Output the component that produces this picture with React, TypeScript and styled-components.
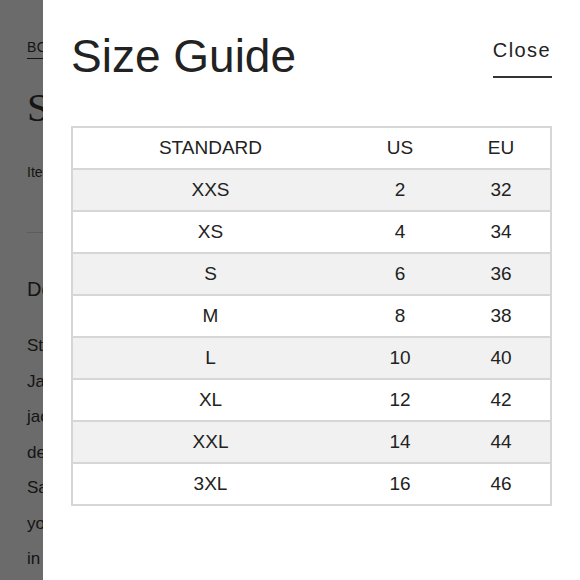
import React from "react";
import styled, { createGlobalStyle } from "styled-components";

const GlobalStyle = createGlobalStyle`
  html, body {
    margin: 0;
    padding: 0;
    background: #ffffff;
  }
  body {
    font-family: "Liberation Sans", Arial, sans-serif;
    color: #333333;
  }
`;

const Viewport = styled.div`
  position: relative;
  width: 580px;
  height: 580px;
  overflow: hidden;
  background: #ffffff;
`;

const Page = styled.div`
  display: flex;
  flex-direction: column;
  padding: 40px 0 0 27px;
  color: #333333;
  font-family: "Liberation Sans", Arial, sans-serif;
`;

const Breadcrumb = styled.a`
  align-self: flex-start;
  font-size: 14px;
  line-height: 14px;
  letter-spacing: 0.5px;
  color: #333333;
  text-decoration: none;
  padding-bottom: 4px;
  border-bottom: 1px solid #333333;
`;

const ProductTitle = styled.h1`
  margin: 29px 0 0;
  font-family: "Liberation Serif", "Times New Roman", serif;
  font-weight: 400;
  font-size: 40px;
  line-height: 40px;
`;

const ItemCode = styled.div`
  margin-top: 37px;
  font-size: 14px;
  line-height: 14px;
`;

const Divider = styled.hr`
  margin: 53px 0 0;
  border: none;
  border-top: 1px solid #dddddd;
  width: 500px;
`;

const SectionHeading = styled.h2`
  margin: 46px 0 0;
  font-size: 20px;
  line-height: 20px;
  font-weight: 400;
`;

const Paragraph = styled.div`
  margin-top: 29px;
  display: flex;
  flex-direction: column;
  font-size: 17px;
  line-height: 35.5px;
`;

const Overlay = styled.div`
  position: absolute;
  inset: 0;
  background: rgba(0, 0, 0, 0.58);
`;

const Drawer = styled.aside`
  position: absolute;
  top: 0;
  right: 0;
  bottom: 0;
  width: 537px;
  box-sizing: border-box;
  background: #ffffff;
  padding: 33px 28px 0 28px;
  display: flex;
  flex-direction: column;
  color: #222222;
  font-family: "Liberation Sans", Arial, sans-serif;
`;

const Header = styled.div`
  display: flex;
  justify-content: space-between;
  align-items: flex-start;
`;

const Title = styled.h2`
  margin: 0;
  font-size: 46px;
  line-height: 46px;
  font-weight: 400;
  color: #222222;
`;

const CloseButton = styled.button`
  margin-top: 7px;
  padding: 0 1px 16px 0;
  background: none;
  border: none;
  border-bottom: 2px solid #333333;
  font-family: inherit;
  font-size: 20px;
  line-height: 20px;
  letter-spacing: 1.4px;
  color: #222222;
  cursor: pointer;
`;

const SizeTable = styled.div`
  margin-top: 47px;
  border: 2px solid #d6d6d6;
  display: flex;
  flex-direction: column;
`;

const Row = styled.div<{ $shaded?: boolean }>`
  display: grid;
  grid-template-columns: 275px 104px 1fr;
  height: 40px;
  background: ${(p) => (p.$shaded ? "#f1f1f1" : "#ffffff")};
  & + & {
    border-top: 2px solid #d6d6d6;
  }
`;

const Cell = styled.div`
  display: flex;
  align-items: center;
  justify-content: center;
  font-size: 19px;
  color: #222222;
`;

const sizes: [string, string, string][] = [
  ["XXS", "2", "32"],
  ["XS", "4", "34"],
  ["S", "6", "36"],
  ["M", "8", "38"],
  ["L", "10", "40"],
  ["XL", "12", "42"],
  ["XXL", "14", "44"],
  ["3XL", "16", "46"],
];

const paragraphLines = [
  "Stretch denim with a relaxed fit.",
  "Jacket and trouser set available,",
  "jacket sold separately in store;",
  "designed for everyday wear.",
  "Saturated colour that lasts —",
  "your new favourite pair, made",
  "in Portugal from organic cotton.",
];

export default function App() {
  return (
    <>
      <GlobalStyle />
      <Viewport>
        <Page>
          <Breadcrumb href="#">BOTTOMS</Breadcrumb>
          <ProductTitle>Straight Leg Jean</ProductTitle>
          <ItemCode>Item #10482</ItemCode>
          <Divider />
          <SectionHeading>Description</SectionHeading>
          <Paragraph>
            {paragraphLines.map((l) => (
              <span key={l}>{l}</span>
            ))}
          </Paragraph>
        </Page>
        <Overlay />
        <Drawer>
          <Header>
            <Title>Size Guide</Title>
            <CloseButton>Close</CloseButton>
          </Header>
          <SizeTable>
            <Row>
              <Cell>STANDARD</Cell>
              <Cell>US</Cell>
              <Cell>EU</Cell>
            </Row>
            {sizes.map(([std, us, eu], i) => (
              <Row key={std} $shaded={i % 2 === 0}>
                <Cell>{std}</Cell>
                <Cell>{us}</Cell>
                <Cell>{eu}</Cell>
              </Row>
            ))}
          </SizeTable>
        </Drawer>
      </Viewport>
    </>
  );
}
